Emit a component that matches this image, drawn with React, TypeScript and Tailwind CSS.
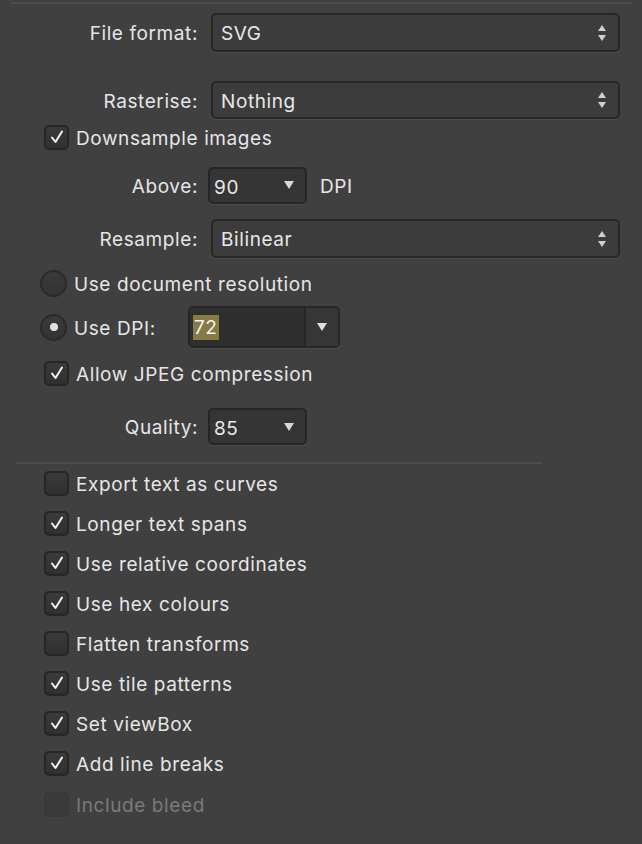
import React from "react";

const font = { fontFamily: "Inter, 'Open Sans', 'Liberation Sans', sans-serif" };

function UpDown() {
  return (
    <svg width="10" height="20" viewBox="0 0 10 20" className="shrink-0">
      <path d="M5 2 L9 8 L1 8 Z" fill="#d0d0d0" />
      <path d="M5 18 L9 12 L1 12 Z" fill="#d0d0d0" />
    </svg>
  );
}

function Down({ c = "#d8d8d8" }: { c?: string }) {
  return (
    <svg width="12" height="10" viewBox="0 0 12 10" className="shrink-0">
      <path d="M1 1 L11 1 L6 9 Z" fill={c} />
    </svg>
  );
}

function Check() {
  return (
    <svg width="16" height="16" viewBox="0 0 16 16">
      <path d="M3 8.5 L6.5 13 L13 2.5" stroke="#f2f2f2" strokeWidth="2" fill="none" strokeLinecap="round" strokeLinejoin="round" />
    </svg>
  );
}

function CheckBox({ checked, disabled }: { checked?: boolean; disabled?: boolean }) {
  return (
    <div
      className={`w-[25px] h-[25px] shrink-0 rounded-[5px] border-2 flex items-center justify-center ${
        disabled ? "border-[#383838] bg-[#3a3a3a]" : "border-[#262626] bg-gradient-to-b from-[#3a3a3a] to-[#303030]"
      }`}
    >
      {checked && <Check />}
    </div>
  );
}

const txt = "text-[19px] tracking-[0.6px] translate-y-[1.5px]";

function CheckRow({ label, checked, disabled, className = "" }: { label: string; checked?: boolean; disabled?: boolean; className?: string }) {
  return (
    <div className={`flex items-center h-[26px] pl-[44px] ${className}`}>
      <CheckBox checked={checked} disabled={disabled} />
      <span className={`ml-[7px] ${txt} ${disabled ? "text-[#7a7a7a]" : "text-[#e6e6e6]"}`}>{label}</span>
    </div>
  );
}

function Radio({ on }: { on?: boolean }) {
  return (
    <div className="w-[27px] h-[27px] shrink-0 rounded-full border-2 border-[#2a2a2a] bg-gradient-to-b from-[#3a3a3a] to-[#333333] flex items-center justify-center">
      {on && <div className="w-[8px] h-[8px] rounded-full bg-[#e0e0e0]" />}
    </div>
  );
}

function Label({ children }: { children: React.ReactNode }) {
  return <div className={`w-[198px] shrink-0 text-right ${txt} text-[#e6e6e6]`}>{children}</div>;
}

function BigSelect({ value, h = "h-[39px]", ml = "ml-[13px]" }: { value: string; h?: string; ml?: string }) {
  return (
    <div className={`${ml} w-[409px] ${h} rounded-[5px] border-2 border-[#272727] bg-[#3c3c3c] shadow-[0_1px_0_#4c4c4c] flex items-center justify-between pl-[8px] pr-[11px]`}>
      <span className={`${txt} text-[#e8e8e8]`}>{value}</span>
      <UpDown />
    </div>
  );
}

function SmallSelect({ value }: { value: string }) {
  return (
    <div className="ml-[10px] w-[99px] h-[37px] rounded-[5px] border-2 border-[#262626] bg-[#353535] shadow-[0_1px_0_#4c4c4c] flex items-center justify-between pl-[4px] pr-[10px]">
      <span className={`${txt} text-[#e8e8e8] mt-[2px]`}>{value}</span>
      <Down />
    </div>
  );
}

export default function App() {
  return (
    <div className="w-[642px] h-[844px] bg-[#404040] overflow-hidden relative" style={font}>
      <div className="flex flex-col">
        <div className="ml-[10px] mt-[2px] w-[622px] h-[2px] bg-[#4b4b4b]" />

        <div className="flex items-center mt-[9px] h-[39px]">
          <Label>File format:</Label>
          <BigSelect value="SVG" />
        </div>

        <div className="flex items-center mt-[29px] h-[38px]">
          <Label>Rasterise:</Label>
          <BigSelect value="Nothing" h="h-[38px]" />
        </div>

        <CheckRow label="Downsample images" checked className="mt-[5px]" />

        <div className="flex items-center mt-[17px] h-[36px]">
          <Label>Above:</Label>
          <SmallSelect value="90" />
          <span className={`ml-[13px] ${txt} text-[#e6e6e6]`}>DPI</span>
        </div>

        <div className="flex items-center mt-[16px] h-[39px]">
          <Label>Resample:</Label>
          <BigSelect value="Bilinear" ml="ml-[13px]" />
        </div>

        <div className="flex items-center mt-[12px] h-[26px] pl-[40px]">
          <Radio />
          <span className={`ml-[7px] ${txt} text-[#e6e6e6]`}>Use document resolution</span>
        </div>

        <div className="flex items-center mt-[10px] h-[42px] pl-[40px]">
          <Radio on />
          <span className={`ml-[7px] w-[114px] ${txt} text-[#e6e6e6]`}>Use DPI:</span>
          <div className="w-[152px] h-[42px] rounded-[5px] border-2 border-[#262626] shadow-[0_1px_0_#4c4c4c] flex overflow-hidden">
            <div className="flex-1 bg-[#2e2e2e] flex items-center pl-[3px] border-r-2 border-[#262626]">
              <span className="bg-[#877a45] text-[#f4f4f4] text-[19px] tracking-[0.6px] px-[1px] h-[25px] leading-[25px]">72</span>
            </div>
            <div className="w-[32px] bg-[#363636] flex items-center justify-center">
              <Down c="#e0e0e0" />
            </div>
          </div>
        </div>

        <CheckRow label="Allow JPEG compression" checked className="mt-[12px]" />

        <div className="flex items-center mt-[22px] h-[37px]">
          <Label>Quality:</Label>
          <SmallSelect value="85" />
        </div>

        <div className="ml-[16px] mt-[17px] w-[526px] h-[2px] bg-[#4d4d4d]" />

        <div className="flex flex-col gap-[14px] mt-[6px]">
          <CheckRow label="Export text as curves" />
          <CheckRow label="Longer text spans" checked />
          <CheckRow label="Use relative coordinates" checked />
          <CheckRow label="Use hex colours" checked />
          <CheckRow label="Flatten transforms" />
          <CheckRow label="Use tile patterns" checked />
          <CheckRow label="Set viewBox" checked />
          <CheckRow label="Add line breaks" checked />
          <CheckRow label="Include bleed" disabled className="mt-[1px]" />
        </div>
      </div>
    </div>
  );
}
